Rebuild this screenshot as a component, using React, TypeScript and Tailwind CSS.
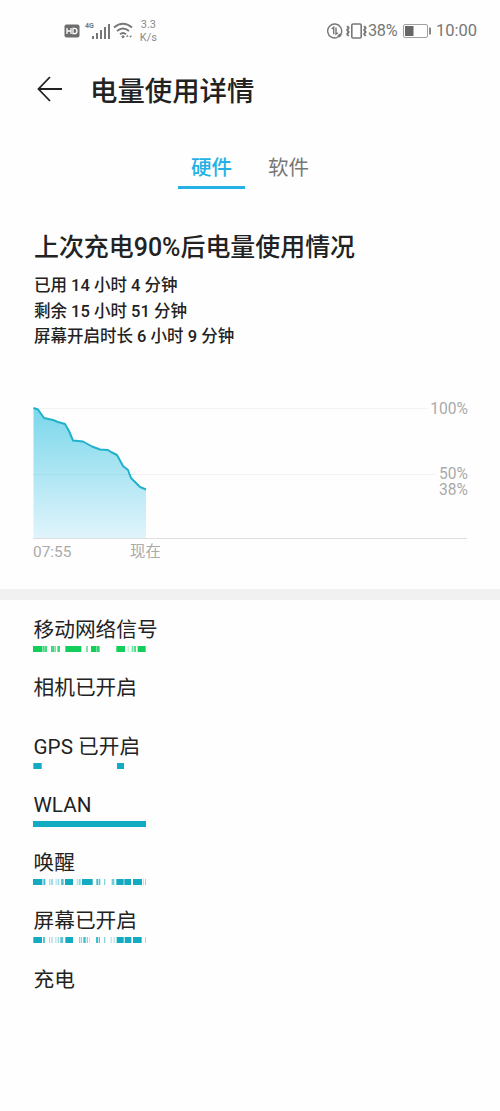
type Segment = [start: number, width: number, opacity?: number];

type UsageItem = {
  label: string;
  color?: string;
  segments?: Segment[];
};

// Segments are measured on a 339 unit long timeline
const items: UsageItem[] = [
  {
    label: "移动网络信号",
    color: "#12cf5c",
    segments: [
      [0, 28], [29, 6, 0.8], [36, 6, 0.8], [54, 10, 0.8], [65, 4, 0.6], [73, 8, 0.8],
      [97, 48], [160, 4, 0.8], [174, 15], [190, 10, 0.9], [250, 26], [284, 3, 0.4],
      [296, 4, 0.6], [302, 7, 0.7], [314, 24],
    ],
  },
  { label: "相机已开启" },
  { label: "GPS 已开启", color: "#12abc2", segments: [[1, 25], [252, 21]] },
  { label: "WLAN", color: "#12abc2", segments: [[0, 339]] },
  {
    label: "唤醒",
    color: "#12abc2",
    segments: [
      [0, 28], [31, 6, 0.8], [48, 4, 0.4], [54, 6, 0.4], [68, 3, 0.4], [74, 5, 0.4],
      [84, 8, 0.7], [96, 24], [131, 3, 0.4], [137, 6, 0.5], [147, 32], [190, 6, 0.8],
      [198, 4, 0.7], [213, 4, 0.5], [236, 8, 0.6], [250, 22], [274, 20], [300, 27],
      [330, 3, 0.3], [336, 2, 0.7],
    ],
  },
  {
    label: "屏幕已开启",
    color: "#12abc2",
    segments: [
      [1, 26], [30, 6, 0.7], [48, 3, 0.4], [55, 4, 0.4], [67, 3, 0.4], [74, 4, 0.4],
      [82, 8, 0.7], [97, 23], [138, 3, 0.5], [143, 4, 0.5], [151, 7, 0.8], [161, 4, 0.5],
      [168, 2, 0.4], [189, 6, 0.8], [197, 4, 0.7], [213, 4, 0.5], [233, 3, 0.4],
      [242, 3, 0.4], [251, 21], [275, 20], [300, 26], [336, 2, 0.6],
    ],
  },
  { label: "充电" },
];

function StatusBar() {
  return (
    <div className="flex h-[60px] items-center pl-[64px] pr-[23px] pt-px text-[#777]">
      <svg className="h-[14px] w-[16px]" viewBox="0 0 16 14">
        <rect x="0.5" y="0.5" width="15" height="13" rx="2" fill="#6d6d6d" />
        <path d="M3 4v6M7 4v6M3 7h4M9 4.3h1.4q2.6 0 2.6 2.7t-2.6 2.7H9z" fill="none" stroke="#fff" strokeWidth="1.3" />
      </svg>
      <div className="ml-[5px] -mr-[2px] mb-[9px] text-[7px] font-bold leading-none">4G</div>
      <svg className="h-[16px] w-[18px]" viewBox="0 0 18 16" fill="#777">
        <rect x="0" y="13" width="2" height="3" />
        <rect x="4" y="10" width="2" height="6" />
        <rect x="8" y="7" width="2" height="9" />
        <rect x="12" y="4" width="2" height="12" />
        <rect x="16" y="1" width="2" height="15" />
      </svg>
      <svg className="ml-[3px] h-[17px] w-[20px]" viewBox="0 0 20 17" fill="none" stroke="#777" strokeWidth="1.9">
        <path d="M1 5.5Q10-2 19 5.5M4 9q6-5 12 0M7 12.2q3-2.5 6 0" />
        <path d="M10 13l1.8 1.8L10 16.6l-1.8-1.8zM13 14.7l1.3-1.9 1.3 1.9zM16.2 13.8l1.4 2 1.4-2z" fill="#777" stroke="none" />
      </svg>
      <div className="ml-[7px] text-center text-[11px] leading-[13px] text-[#8a8a8a]">
        <div>3.3</div>
        <div>K/s</div>
      </div>
      <div className="ml-auto flex items-center">
        <svg className="h-[16px] w-[16px]" viewBox="0 0 16 16" fill="none" stroke="#777" strokeWidth="1.4">
          <path d="M14.2 10.5A7 7 0 1 0 10.5 14.4" />
          <path d="M4.7 6L6.7 4.3v7M9 4.5v6.7l2-1.5" />
          <path d="M10 14.5q.5-4 5-4.5-.3 4.8-5 4.5z" fill="#777" stroke="none" />
        </svg>
        <svg className="ml-[3px] h-[16px] w-[21px]" viewBox="0 0 21 16" fill="none" stroke="#777">
          <rect x="5.8" y="1" width="9.4" height="14" rx="1.3" strokeWidth="1.6" />
          <path d="M1.2 3l1.4 2-1.4 2 1.4 2-1.4 2 1.4 2M18.2 3l1.4 2-1.4 2 1.4 2-1.4 2 1.4 2" strokeWidth="2" />
        </svg>
        <span className="ml-px w-[31px] pt-[2px] text-[16.3px] tracking-[-0.2px]">38%</span>
        <svg className="ml-[4px] h-[14px] w-[28px]" viewBox="0 0 28 14">
          <rect x="0.5" y="0.5" width="24" height="13" rx="1.5" fill="none" stroke="#a0a0a0" />
          <rect x="2" y="2" width="8.5" height="10" fill="#666" />
          <rect x="26" y="3.5" width="2" height="7" rx="0.5" fill="#888" />
        </svg>
        <span className="ml-[5px] pt-[2px] text-[16.5px]">10:00</span>
      </div>
    </div>
  );
}

function Timeline({ color, segments }: { color: string; segments: Segment[] }) {
  return (
    <svg className="block h-[6px] w-[113px]" viewBox="0 0 339 18" fill={color}>
      {segments.map(([start, width, opacity]) => (
        <rect key={start} x={start} width={width} height="18" opacity={opacity ?? 1} />
      ))}
    </svg>
  );
}

function BatteryChart() {
  return (
    <div className="ml-[33px] mr-[32px]">
      <svg className="block h-[141px] w-[435px]" viewBox="0 0 435 141" fontSize="15.6" fill="#aaa">
        <defs>
          <linearGradient id="level" x1="0" y1="0" x2="0" y2="1">
            <stop offset="0" stopColor="#7ad7eb" />
            <stop offset="1" stopColor="#e1f4fc" />
          </linearGradient>
        </defs>
        <path d="M0 8.5h394M0 74.5h402" stroke="#f3f3f3" />
        <path
          d="M0.5 8L5 9.5 11 18 20 20 25 22 32 24 36 31 40 40.5 50 41.5 59 46.5 67 49.5 75 50 78 52 84 55 90 66 95 70 98 78 107 87 113 89.5V138.5H0.5z"
          fill="url(#level)"
        />
        <path d="M0 74.5h101" stroke="#84cfdf" strokeOpacity="0.3" />
        <path
          d="M0.5 8L5 9.5 11 18 20 20 25 22 32 24 36 31 40 40.5 50 41.5 59 46.5 67 49.5 75 50 78 52 84 55 90 66 95 70 98 78 107 87 113 89.5"
          fill="none"
          stroke="#20b2cb"
          strokeWidth="2"
          strokeLinejoin="round"
        />
        <path d="M0 138.5h434" stroke="#dedede" />
        <text x="435" y="13.5" textAnchor="end">100%</text>
        <text x="435" y="79" textAnchor="end">50%</text>
        <text x="435" y="95" textAnchor="end">38%</text>
      </svg>
      <div className="flex h-[22px] text-[15.4px] leading-[23px] text-[#aaa]">
        <span className="w-[97px]">07:55</span>
        <span>现在</span>
      </div>
    </div>
  );
}

export default function App() {
  return (
    <div className="h-[1111px] w-[500px] overflow-hidden bg-[#fefefe] font-['Roboto','Noto_Sans_CJK_SC',sans-serif] text-[#222]">
      <StatusBar />

      <header className="flex h-[60px] items-center pl-[37px]">
        <svg className="mb-[2px] h-[26px] w-[26px]" viewBox="0 0 26 26" fill="none" stroke="#222" strokeWidth="1.8">
          <path d="M13 1L1.5 13 13 25M1.5 13H25" />
        </svg>
        <h1 className="ml-[27px] pt-[3px] text-[27.4px] font-medium leading-[40px]">电量使用详情</h1>
      </header>

      <nav className="mt-[25px] flex h-[44px] pl-[178px] text-[20.5px] leading-[46px]">
        <div className="w-[67px] border-b-[3px] border-[#25b1e5] text-center font-medium text-[#25b1e5]">硬件</div>
        <div className="ml-[23px] text-[#777]">软件</div>
      </nav>

      <section className="mt-[38px] h-[173px] pl-[34px]">
        <h2 className="pt-px text-[24.95px] font-medium leading-[40px]">上次充电90%后电量使用情况</h2>
        <div className="mt-[5px] text-[16.5px] font-medium leading-[25.6px]">
          <p>已用 14 小时 4 分钟</p>
          <p>剩余 15 小时 51 分钟</p>
          <p>屏幕开启时长 6 小时 9 分钟</p>
        </div>
      </section>

      <BatteryChart />

      <div className="mt-[26px] h-[11px] bg-[#f1f1f1]" />

      <section className="pl-[33px] pt-[13px]">
        {items.map((item) => (
          <div key={item.label} className="h-[58.3px]">
            <div className="h-[33px] pl-[0.5px] text-[20.7px] leading-[34px]">{item.label}</div>
            {item.color && item.segments && <Timeline color={item.color} segments={item.segments} />}
          </div>
        ))}
      </section>
    </div>
  );
}
